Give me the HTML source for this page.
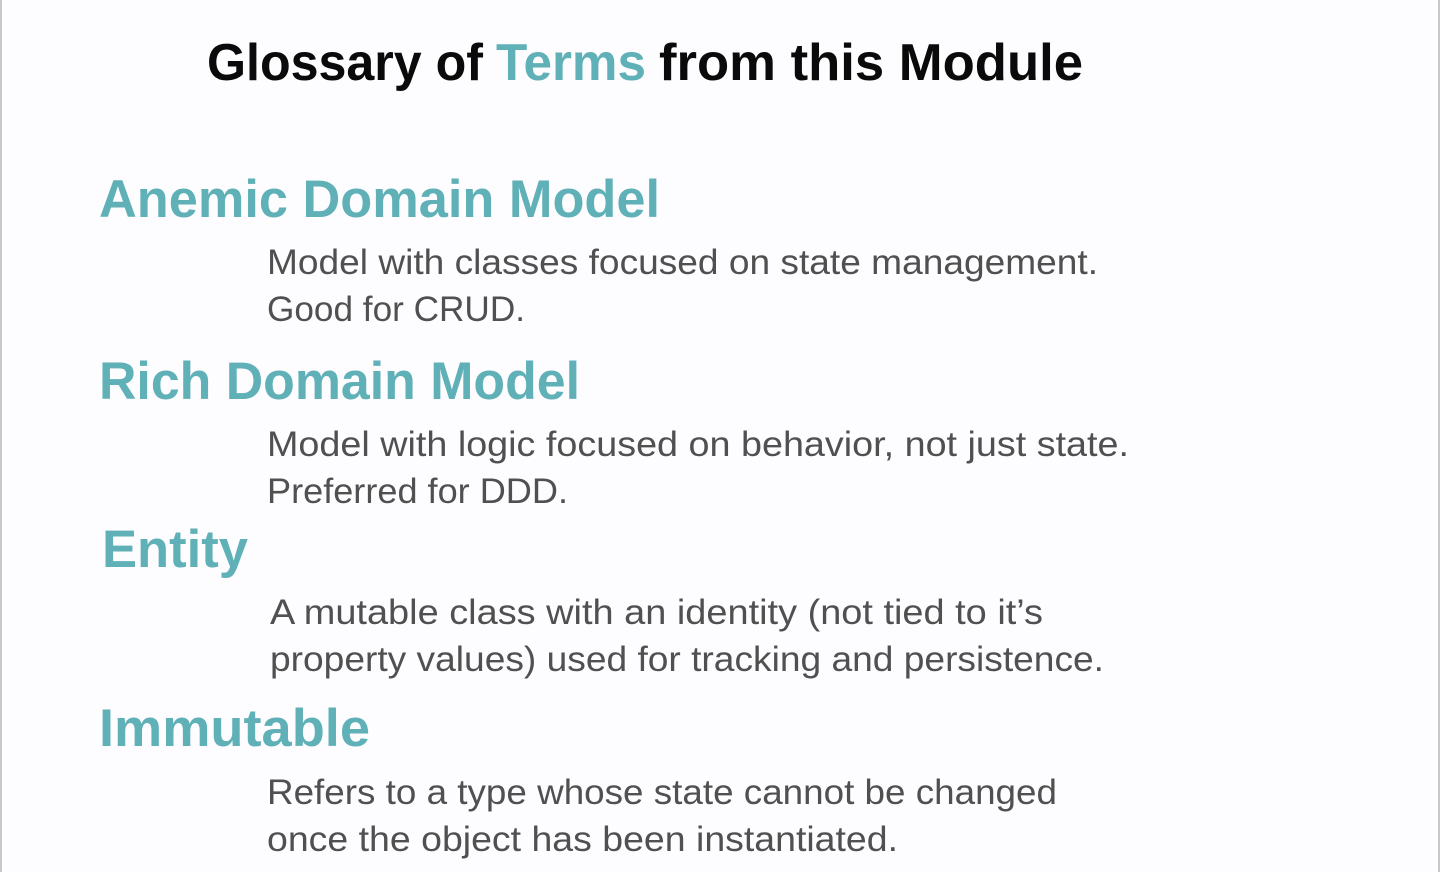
<!DOCTYPE html>
<html><head><meta charset="utf-8"><style>
html,body{margin:0;padding:0;background:#fdfcfe;}
svg{display:block}
text{font-family:"Liberation Sans",sans-serif;}
.h{font-weight:bold;font-size:53px;fill:#5fb1b7}
.b{font-size:35px;fill:#505050}
.t{font-weight:bold;font-size:52px;fill:#0a0a0a}
</style></head><body>
<svg width="1440" height="872" xmlns="http://www.w3.org/2000/svg">
<rect width="1440" height="872" fill="#fdfcfe"/>
<rect x="0" y="0" width="2" height="872" fill="#c8c8c8"/>
<rect x="1438" y="0" width="2" height="872" fill="#c8c8c8"/>
<text class="t" x="207" y="80" textLength="276" lengthAdjust="spacingAndGlyphs">Glossary of</text>
<text class="t" x="496" y="80" textLength="150" lengthAdjust="spacingAndGlyphs" style="fill:#5fb1b7">Terms</text>
<text class="t" x="659" y="80" textLength="424" lengthAdjust="spacingAndGlyphs">from this Module</text>

<text class="h" x="99" y="217" textLength="561" lengthAdjust="spacingAndGlyphs">Anemic Domain Model</text>
<text class="b" x="267" y="274" textLength="831" lengthAdjust="spacingAndGlyphs">Model with classes focused on state management.</text>
<text class="b" x="267" y="321" textLength="258" lengthAdjust="spacingAndGlyphs">Good for CRUD.</text>

<text class="h" x="99" y="399" textLength="481" lengthAdjust="spacingAndGlyphs">Rich Domain Model</text>
<text class="b" x="267" y="456" textLength="862" lengthAdjust="spacingAndGlyphs">Model with logic focused on behavior, not just state.</text>
<text class="b" x="267" y="503" textLength="301" lengthAdjust="spacingAndGlyphs">Preferred for DDD.</text>

<text class="h" x="102" y="567" textLength="146" lengthAdjust="spacingAndGlyphs">Entity</text>
<text class="b" x="270" y="624" textLength="773" lengthAdjust="spacingAndGlyphs">A mutable class with an identity (not tied to it’s</text>
<text class="b" x="270" y="671" textLength="834" lengthAdjust="spacingAndGlyphs">property values) used for tracking and persistence.</text>

<text class="h" x="99" y="746" textLength="271" lengthAdjust="spacingAndGlyphs">Immutable</text>
<text class="b" x="267" y="804" textLength="790" lengthAdjust="spacingAndGlyphs">Refers to a type whose state cannot be changed</text>
<text class="b" x="267" y="851" textLength="631" lengthAdjust="spacingAndGlyphs">once the object has been instantiated.</text>
</svg>
</body></html>
